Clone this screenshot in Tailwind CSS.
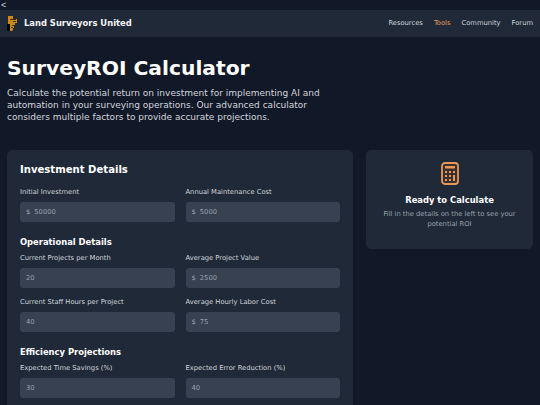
<!DOCTYPE html>
<html lang="en">
<head>
  <meta charset="UTF-8" />
  <script src="https://cdn.jsdelivr.net/npm/@tailwindcss/browser@4"></script>
  <title>SurveyROI Calculator</title>
</head>
<body class="bg-[#111827] h-[405px] overflow-hidden text-white font-['DejaVu_Sans',sans-serif]">
  <div class="h-[10px] text-[9px] leading-[10px] text-gray-300 pl-px font-['Liberation_Sans',sans-serif]">&lt;</div>

  <!-- Nav -->
  <nav class="bg-[#1f2937] h-[27px] flex items-center justify-between px-[7px]">
    <div class="flex items-center gap-[7px]">
      <svg class="w-[10px] h-[15px]" viewBox="0 0 10 15">
        <path d="M0 8h3v7H0z" fill="#000" />
        <path d="M1 0h5v3h4v4H8v2H7v3H6v2l-1 1H3V8H1z" fill="#c98a1c" />
        <path d="M3 3h6v1H3zM5 9h2v1H5zM4 11h2v1H4zM6 5h3v1H6z" fill="#4a3210" />
      </svg>
      <span class="text-[8.4px] font-bold text-gray-100">Land Surveyors United</span>
    </div>
    <div class="flex items-center gap-[11px] text-[6.75px] text-gray-300">
      <a>Resources</a>
      <a class="text-[#e5985a]">Tools</a>
      <a>Community</a>
      <a>Forum</a>
    </div>
  </nav>

  <!-- Header -->
  <header class="px-[7px] pt-[19px]">
    <h1 class="text-[20.25px] leading-[24px] font-bold">SurveyROI Calculator</h1>
    <p class="mt-[7px] w-[340px] text-[9px] leading-[12px] text-gray-300">Calculate the potential return on investment for implementing AI and automation in your surveying operations. Our advanced calculator considers multiple factors to provide accurate projections.</p>
  </header>

  <main class="px-[7px] pt-[27px] flex items-start gap-[13px]">
    <!-- Form -->
    <section class="w-[346px] shrink-0 bg-[#1f2937] rounded-[5px] px-[13px] pt-[13px] pb-[20px]">
      <h2 class="text-[10.1px] leading-[13px] font-bold">Investment Details</h2>
      <div class="mt-[12px] grid grid-cols-2 gap-x-[11px]">
        <div>
          <label class="block text-[6.75px] leading-[9px] text-gray-300">Initial Investment</label>
          <div class="mt-[5px] h-[20px] rounded-[3px] bg-[#374151] flex items-center px-[6px] gap-[4px] text-[6.75px] text-gray-400"><span>$</span><span>50000</span></div>
        </div>
        <div>
          <label class="block text-[6.75px] leading-[9px] text-gray-300">Annual Maintenance Cost</label>
          <div class="mt-[5px] h-[20px] rounded-[3px] bg-[#374151] flex items-center px-[6px] gap-[4px] text-[6.75px] text-gray-400"><span>$</span><span>5000</span></div>
        </div>
      </div>

      <h3 class="mt-[14px] text-[8.4px] leading-[12px] font-bold">Operational Details</h3>
      <div class="mt-[6px] grid grid-cols-2 gap-x-[11px] gap-y-[10px]">
        <div>
          <label class="block text-[6.75px] leading-[9px] text-gray-300">Current Projects per Month</label>
          <div class="mt-[5px] h-[20px] rounded-[3px] bg-[#374151] flex items-center px-[6px] text-[6.75px] text-gray-400">20</div>
        </div>
        <div>
          <label class="block text-[6.75px] leading-[9px] text-gray-300">Average Project Value</label>
          <div class="mt-[5px] h-[20px] rounded-[3px] bg-[#374151] flex items-center px-[6px] gap-[4px] text-[6.75px] text-gray-400"><span>$</span><span>2500</span></div>
        </div>
        <div>
          <label class="block text-[6.75px] leading-[9px] text-gray-300">Current Staff Hours per Project</label>
          <div class="mt-[5px] h-[20px] rounded-[3px] bg-[#374151] flex items-center px-[6px] text-[6.75px] text-gray-400">40</div>
        </div>
        <div>
          <label class="block text-[6.75px] leading-[9px] text-gray-300">Average Hourly Labor Cost</label>
          <div class="mt-[5px] h-[20px] rounded-[3px] bg-[#374151] flex items-center px-[6px] gap-[4px] text-[6.75px] text-gray-400"><span>$</span><span>75</span></div>
        </div>
      </div>

      <h3 class="mt-[14px] text-[8.4px] leading-[12px] font-bold">Efficiency Projections</h3>
      <div class="mt-[6px] grid grid-cols-2 gap-x-[11px]">
        <div>
          <label class="block text-[6.75px] leading-[9px] text-gray-300">Expected Time Savings (%)</label>
          <div class="mt-[5px] h-[20px] rounded-[3px] bg-[#374151] flex items-center px-[6px] text-[6.75px] text-gray-400">30</div>
        </div>
        <div>
          <label class="block text-[6.75px] leading-[9px] text-gray-300">Expected Error Reduction (%)</label>
          <div class="mt-[5px] h-[20px] rounded-[3px] bg-[#374151] flex items-center px-[6px] text-[6.75px] text-gray-400">40</div>
        </div>
      </div>
    </section>

    <!-- Result placeholder -->
    <aside class="w-[167px] h-[99px] bg-[#1f2937] rounded-[5px] flex flex-col items-center pt-[12px]">
      <svg class="w-[18px] h-[23px]" viewBox="0 0 18 23" fill="none">
        <rect x="1" y="1" width="16" height="21" rx="3" fill="#3a2f2a" stroke="#e5985a" stroke-width="1.8" />
        <rect x="4" y="4" width="10" height="2.5" fill="#e5985a" />
        <path d="M4 9h2v2H4zM8 9h2v2H8zM12 9h2v2h-2zM4 13h2v2H4zM8 13h2v2H8zM4 17h2v2H4zM8 17h2v2H8zM12 13h2v6h-2z" fill="#e5985a" />
      </svg>
      <h3 class="mt-[9px] text-[8.4px] leading-[12px] font-bold">Ready to Calculate</h3>
      <p class="mt-[3px] w-[150px] text-center text-[6.75px] leading-[10px] text-gray-400">Fill in the details on the left to see your potential ROI</p>
    </aside>
  </main>
</body>
</html>
